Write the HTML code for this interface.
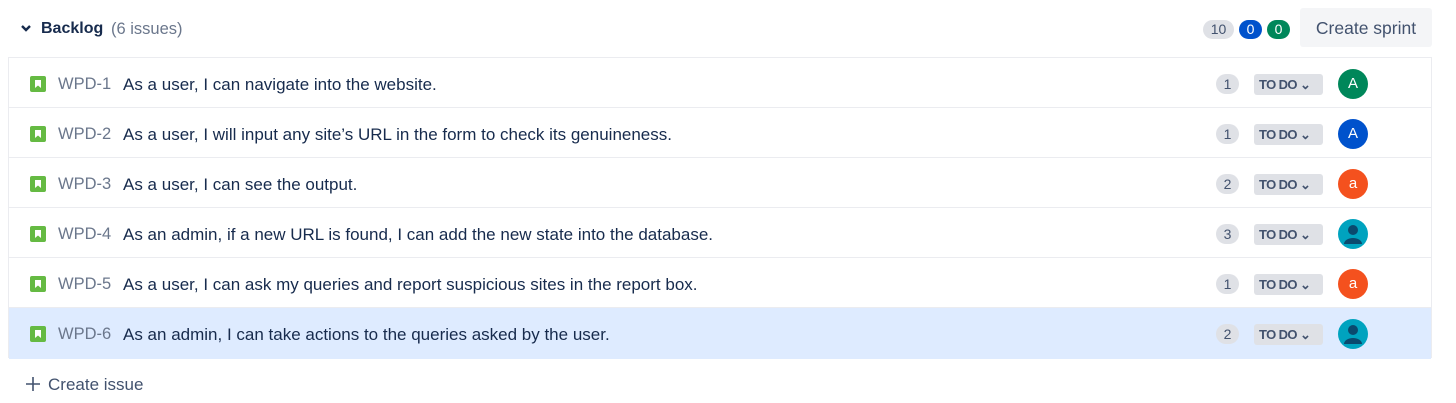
<!DOCTYPE html>
<html><head><style>
*{margin:0;padding:0;box-sizing:border-box}
body{width:1456px;height:403px;background:#fff;font-family:"Liberation Sans",sans-serif;color:#172b4d;position:relative;overflow:hidden}
.abs{position:absolute}
.list{position:absolute;left:8px;top:57px;width:1424px;height:301px;border:1px solid #ebecf0;border-bottom:none}
.row{position:absolute;left:0;width:1422px;height:50px;border-bottom:1px solid #ebecf0}
.row.sel{background:#deebff}
.ic{position:absolute;left:21px;top:18px;width:16px;height:16px;background:#65ba43;border-radius:2px}
.key{position:absolute;left:49px;top:17px;font-size:16.5px;color:#6b778c}
.sum{position:absolute;left:114px;top:17px;font-size:17px;color:#172b4d}
.est{position:absolute;left:1207px;top:16px;width:23px;height:20px;border-radius:10px;background:#dfe1e6;font-size:14px;text-align:center;line-height:20px;color:#42526e}
.todo{position:absolute;left:1245px;top:16px;width:69px;height:21px;border-radius:3px;background:#dfe1e6;font-size:13px;font-weight:bold;color:#42526e;line-height:21px;padding-left:5px;letter-spacing:-0.6px}
.av{position:absolute;left:1329px;top:11px;width:30px;height:30px;border-radius:50%;color:#fff;font-size:15px;text-align:center;line-height:30px}
</style></head><body>
<svg class="abs" style="left:20px;top:24px" width="12" height="10" viewBox="0 0 12 10"><path d="M2 2 L6 6 L10 2" stroke="#172b4d" stroke-width="2.4" fill="none"/></svg>
<div class="abs" style="left:41px;top:20px;font-size:16px;font-weight:bold">Backlog</div>
<div class="abs" style="left:111px;top:20px;font-size:16.5px;color:#6b778c">(6 issues)</div>
<div class="abs" style="left:1203px;top:20px;width:31px;height:19px;border-radius:10px;background:#dfe1e6;font-size:14px;text-align:center;line-height:19px;color:#42526e">10</div>
<div class="abs" style="left:1239px;top:20px;width:23px;height:19px;border-radius:10px;background:#0052cc;font-size:14px;text-align:center;line-height:19px;color:#fff">0</div>
<div class="abs" style="left:1267px;top:20px;width:23px;height:19px;border-radius:10px;background:#00875a;font-size:14px;text-align:center;line-height:19px;color:#fff">0</div>
<div class="abs" style="left:1300px;top:8px;width:132px;height:39px;border-radius:3px;background:#f4f5f7;font-size:17.5px;text-align:center;line-height:40px;color:#42526e">Create sprint</div>
<div class="list">
<div class="row" style="top:0"><div class="ic"><svg width="16" height="16"><path d="M5 4h6v8l-3-2.5-3 2.5z" fill="#fff"/></svg></div><div class="key">WPD-1</div><div class="sum">As a user, I can navigate into the website.</div><div class="est">1</div><div class="todo">TO DO ⌄</div><div class="av" style="background:#00875a">A</div></div>
<div class="row" style="top:50px"><div class="ic"><svg width="16" height="16"><path d="M5 4h6v8l-3-2.5-3 2.5z" fill="#fff"/></svg></div><div class="key">WPD-2</div><div class="sum">As a user, I will input any site’s URL in the form to check its genuineness.</div><div class="est">1</div><div class="todo">TO DO ⌄</div><div class="av" style="background:#0052cc">A</div></div>
<div class="row" style="top:100px"><div class="ic"><svg width="16" height="16"><path d="M5 4h6v8l-3-2.5-3 2.5z" fill="#fff"/></svg></div><div class="key">WPD-3</div><div class="sum">As a user, I can see the output.</div><div class="est">2</div><div class="todo">TO DO ⌄</div><div class="av" style="background:#f4511e">a</div></div>
<div class="row" style="top:150px"><div class="ic"><svg width="16" height="16"><path d="M5 4h6v8l-3-2.5-3 2.5z" fill="#fff"/></svg></div><div class="key">WPD-4</div><div class="sum">As an admin, if a new URL is found, I can add the new state into the database.</div><div class="est">3</div><div class="todo">TO DO ⌄</div><div class="av" style="background:#00a3bf;overflow:hidden"><svg width="30" height="30"><circle cx="15" cy="11" r="5" fill="#0a4a6e"/><path d="M6 25a9 6 0 0 1 18 0z" fill="#0a4a6e"/></svg></div></div>
<div class="row" style="top:200px"><div class="ic"><svg width="16" height="16"><path d="M5 4h6v8l-3-2.5-3 2.5z" fill="#fff"/></svg></div><div class="key">WPD-5</div><div class="sum">As a user, I can ask my queries and report suspicious sites in the report box.</div><div class="est">1</div><div class="todo">TO DO ⌄</div><div class="av" style="background:#f4511e">a</div></div>
<div class="row sel" style="top:250px;height:51px;border-bottom:none"><div class="ic"><svg width="16" height="16"><path d="M5 4h6v8l-3-2.5-3 2.5z" fill="#fff"/></svg></div><div class="key">WPD-6</div><div class="sum">As an admin, I can take actions to the queries asked by the user.</div><div class="est">2</div><div class="todo">TO DO ⌄</div><div class="av" style="background:#00a3bf;overflow:hidden"><svg width="30" height="30"><circle cx="15" cy="11" r="5" fill="#0a4a6e"/><path d="M6 25a9 6 0 0 1 18 0z" fill="#0a4a6e"/></svg></div></div>
</div>
<svg class="abs" style="left:25px;top:376px" width="16" height="16"><path d="M8 1v14M1 8h14" stroke="#42526e" stroke-width="1.6"/></svg>
<div class="abs" style="left:48px;top:375px;font-size:17px;color:#42526e">Create issue</div>
</body></html>
